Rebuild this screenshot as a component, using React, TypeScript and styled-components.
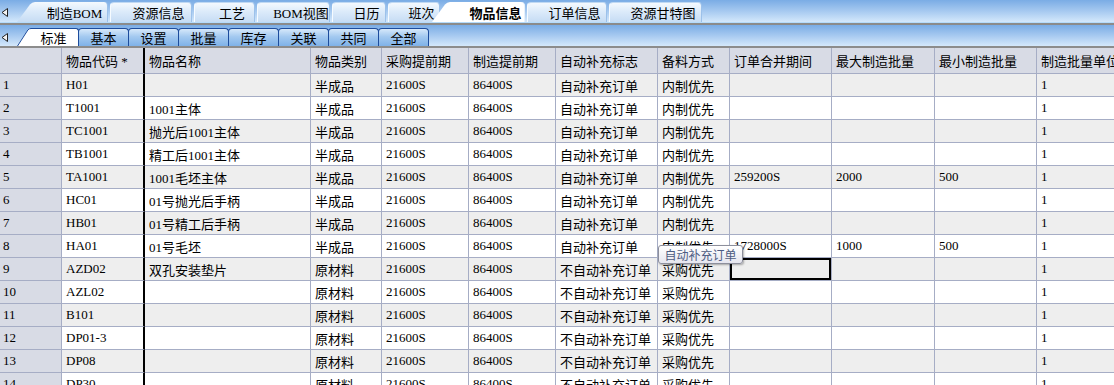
import styled, { createGlobalStyle } from 'styled-components';

const GlobalStyle = createGlobalStyle`
  html, body {
    margin: 0;
    padding: 0;
    overflow: hidden;
    background: #ffffff;
  }
  body {
    font-family: 'Liberation Serif', 'Noto Sans CJK SC', serif;
    font-size: 13px;
    color: #000;
  }
`;

// 列宽 (含右边框)
const COLS = [62, 83, 166, 71, 87, 87, 102, 72, 102, 103, 102, 100];
const FROZEN = 1;

const HEADERS = [
  '',
  '物品代码 *',
  '物品名称',
  '物品类别',
  '采购提前期',
  '制造提前期',
  '自动补充标志',
  '备料方式',
  '订单合并期间',
  '最大制造批量',
  '最小制造批量',
  '制造批量单位',
];

const semi = (code: string, name: string, extra: string[] = ['', '', '']) => [
  code,
  name,
  '半成品',
  '21600S',
  '86400S',
  '自动补充订单',
  '内制优先',
  ...extra,
  '1',
];

const raw = (code: string, name = '') => [
  code,
  name,
  '原材料',
  '21600S',
  '86400S',
  '不自动补充订单',
  '采购优先',
  '',
  '',
  '',
  '1',
];

const ROWS: string[][] = [
  semi('H01', ''),
  semi('T1001', '1001主体'),
  semi('TC1001', '抛光后1001主体'),
  semi('TB1001', '精工后1001主体'),
  semi('TA1001', '1001毛坯主体', ['259200S', '2000', '500']),
  semi('HC01', '01号抛光后手柄'),
  semi('HB01', '01号精工后手柄'),
  semi('HA01', '01号毛坯', ['1728000S', '1000', '500']),
  raw('AZD02', '双孔安装垫片'),
  raw('AZL02'),
  raw('B101'),
  raw('DP01-3'),
  raw('DP08'),
  raw('DP30'),
];

const TOP_TABS = [
  { label: '制造BOM', w: 91, pad: 25, slant: true },
  { label: '资源信息', w: 82, pad: 15 },
  { label: '工艺', w: 61, pad: 15 },
  { label: 'BOM视图', w: 73, pad: 15 },
  { label: '日历', w: 54, pad: 15 },
  { label: '班次', w: 52, pad: 15 },
  { label: '物品信息', w: 93, pad: 35, active: true },
  { label: '订单信息', w: 80, pad: 15 },
  { label: '资源甘特图', w: 93, pad: 15 },
];

const SUB_TABS = ['基本', '设置', '批量', '库存', '关联', '共同', '全部'];

const Arrow = ({ top }: { top: number }) => (
  <ArrowBox $top={top}>
    <svg width="8" height="9" viewBox="0 0 8 9">
      <path d="M6.5 0.5 L6.5 8.5 L1 4.5 Z" fill="#f4f4f4" stroke="#222" strokeWidth="1" />
    </svg>
  </ArrowBox>
);

const TopTab = ({ label, w, pad, slant, active }: (typeof TOP_TABS)[number]) => {
  if (active || slant) {
    return (
      <TopTabWrap $w={w} $active={active}>
        <svg width="18" height="20" viewBox="0 0 18 20">
          <defs>
            <linearGradient id="topTabFill" x1="0" y1="0" x2="0" y2="1">
              <stop offset="0" stopColor="#f4f9fe" />
              <stop offset="0.45" stopColor="#dcebfa" />
              <stop offset="1" stopColor="#c6dcf4" />
            </linearGradient>
          </defs>
          <path
            d="M0 20 L13 2.5 Q15 0 18 0 L18 20 Z"
            fill={active ? '#ffffff' : 'url(#topTabFill)'}
          />
        </svg>
        <TopTabBody $active={active} $pad={pad - 18} $bold={active}>
          {label}
        </TopTabBody>
      </TopTabWrap>
    );
  }
  return (
    <TopTabPlain $w={w} $pad={pad}>
      {label}
    </TopTabPlain>
  );
};

export default function App() {
  return (
    <Page>
      <GlobalStyle />
      <TopBar>
        <Arrow top={8} />
        <TopTabs>
          {TOP_TABS.map(t => (
            <TopTab key={t.label} {...t} />
          ))}
        </TopTabs>
      </TopBar>
      <BarDivider />
      <SubBar>
        <Arrow top={8} />
        <SubTabActive>
          <svg width="14" height="18" viewBox="0 0 14 18">
            <path d="M0 18 L11 1.5 Q12.3 0 14 0 L14 18 Z" fill="#ffffff" />
            <path d="M0.5 18 L11 1.8 Q12.3 0.5 14 0.5" fill="none" stroke="#1d4c9c" strokeWidth="1" />
          </svg>
          <SubTabActiveBody>标准</SubTabActiveBody>
        </SubTabActive>
        {SUB_TABS.map(t => (
          <SubTab key={t}>{t}</SubTab>
        ))}
      </SubBar>
      <GridWrap>
        <GridRow $h={26}>
          {HEADERS.map((h, i) => (
            <Cell key={i} $head $freeze={i === FROZEN}>
              {h}
            </Cell>
          ))}
        </GridRow>
        {ROWS.map((row, r) => (
          <GridRow key={r} $h={23}>
            <Cell $head $rowHead>
              {r + 1}
            </Cell>
            {row.map((v, c) => (
              <Cell
                key={c}
                $alt={r % 2 === 0}
                $freeze={c + 1 === FROZEN}
                $sel={r === 8 && c + 1 === 8}
              >
                {v}
              </Cell>
            ))}
          </GridRow>
        ))}
        <Tooltip>自动补充订单</Tooltip>
      </GridWrap>
    </Page>
  );
}

const Page = styled.div`
  width: 1114px;
  height: 385px;
  overflow: hidden;
  position: relative;
  background: #fff;
`;

const barGradient = 'linear-gradient(180deg, #7aace5 0%, #a6c9f0 50%, #d4e8fb 100%)';

const TopBar = styled.div`
  display: flex;
  align-items: flex-end;
  height: 22px;
  background: ${barGradient};
`;

const BarDivider = styled.div`
  height: 3px;
  background: linear-gradient(180deg, #b4dbfb 0 1px, #8b8b8b 1px 100%);
`;

const ArrowBox = styled.div<{ $top: number }>`
  align-self: flex-start;
  width: 17px;
  flex: none;
  padding-top: ${p => p.$top}px;
  padding-left: 1px;
  box-sizing: border-box;
  line-height: 0;
`;

const TopTabs = styled.div`
  display: flex;
  align-items: flex-end;
  gap: 2px;
`;

const TopTabPlain = styled.div<{ $w: number; $pad: number }>`
  width: ${p => p.$w}px;
  height: 20px;
  box-sizing: border-box;
  padding-left: ${p => p.$pad}px;
  display: flex;
  align-items: center;
  justify-content: center;
  border-radius: 4px 4px 0 0;
  border-top: 1px solid #c0d9f3;
  border-right: 1px solid #9cc1ea;
  border-left: 1px solid #f6fbff;
  background: linear-gradient(180deg, #f4f9fe 0%, #dcebfa 45%, #c6dcf4 100%);
  white-space: nowrap;
`;

const TopTabWrap = styled.div<{ $w: number; $active?: boolean }>`
  display: flex;
  width: ${p => p.$w}px;
  height: 20px;
  margin-left: ${p => (p.$active ? -10 : 0)}px;
  position: relative;
  z-index: ${p => (p.$active ? 2 : 1)};
  line-height: 0;
`;

const TopTabBody = styled.div<{ $active?: boolean; $pad: number; $bold?: boolean }>`
  flex: 1;
  height: 20px;
  box-sizing: border-box;
  padding-left: ${p => p.$pad}px;
  display: flex;
  align-items: center;
  justify-content: center;
  line-height: normal;
  border-radius: 0 4px 0 0;
  font-weight: ${p => (p.$bold ? 'bold' : 'normal')};
  background: ${p =>
    p.$active ? '#ffffff' : 'linear-gradient(180deg, #f4f9fe 0%, #dcebfa 45%, #c6dcf4 100%)'};
  border-right: 1px solid ${p => (p.$active ? '#e8f2fc' : '#9cc1ea')};
  white-space: nowrap;
`;

const SubBar = styled.div`
  display: flex;
  align-items: flex-end;
  height: 21px;
  background: ${barGradient};
  border-bottom: 2px solid #8c8c8c;
`;

const SubTabActive = styled.div`
  display: flex;
  width: 62px;
  height: 18px;
  line-height: 0;
  position: relative;
  z-index: 2;
`;

const SubTabActiveBody = styled.div`
  flex: 1;
  box-sizing: border-box;
  height: 18px;
  display: flex;
  align-items: center;
  justify-content: center;
  line-height: normal;
  background: #ffffff;
  border-top: 1px solid #1d4c9c;
  border-right: 1px solid #1d4c9c;
  border-radius: 0 3px 0 0;
  padding-right: 2px;
`;

const SubTab = styled.div`
  width: 51px;
  height: 18px;
  margin-left: -1px;
  box-sizing: border-box;
  display: flex;
  align-items: center;
  justify-content: center;
  border: 1px solid #1d4c9c;
  border-bottom: none;
  border-radius: 4px 4px 0 0;
  background: linear-gradient(180deg, #d6e8fa 0%, #a3c9f0 45%, #7fb2e8 100%);
`;

const GridWrap = styled.div`
  position: relative;
`;

const GridRow = styled.div<{ $h: number }>`
  display: grid;
  grid-template-columns: ${COLS.map(c => `${c}px`).join(' ')};
  height: ${p => p.$h}px;
`;

const Cell = styled.div<{
  $head?: boolean;
  $rowHead?: boolean;
  $alt?: boolean;
  $freeze?: boolean;
  $sel?: boolean;
}>`
  box-sizing: border-box;
  display: flex;
  align-items: center;
  padding: 0 ${p => (p.$rowHead ? 3 : 4)}px;
  white-space: nowrap;
  overflow: hidden;
  border-right: ${p => (p.$freeze ? '2px solid #000000' : '1px solid #a6adc5')};
  border-bottom: 1px solid #a6adc5;
  background: ${p => (p.$head ? '#d8dbe5' : p.$alt ? '#eeeeee' : '#ffffff')};
  box-shadow: ${p => (p.$sel ? 'inset 0 0 0 2px #000' : 'none')};
`;

const Tooltip = styled.div`
  position: absolute;
  left: 658px;
  top: 197px;
  width: 85px;
  height: 19px;
  box-sizing: border-box;
  display: flex;
  align-items: center;
  justify-content: center;
  font-family: 'Noto Sans CJK SC', sans-serif;
  font-size: 12px;
  color: #4d5c82;
  background: linear-gradient(180deg, #ffffff 0%, #e6e6ef 100%);
  border: 1px solid #8d8f9c;
  border-radius: 3px;
  box-shadow: 1px 1px 2px rgba(0, 0, 0, 0.3);
`;
